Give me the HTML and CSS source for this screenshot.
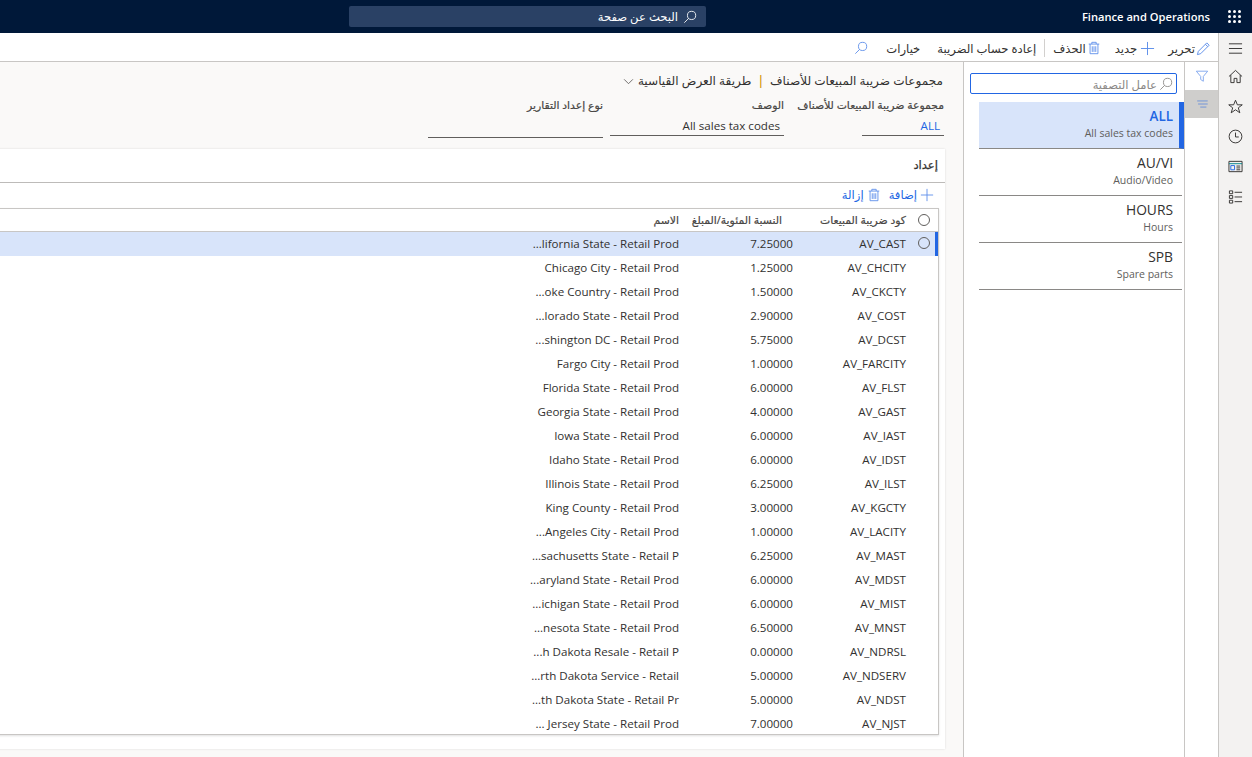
FILE: index.html
```html
<!DOCTYPE html>
<html lang="ar" dir="rtl">
<head>
<meta charset="utf-8">
<title>مجموعات ضريبة المبيعات للأصناف</title>
<link rel="stylesheet" href="styles.css">
</head>
<body>
<svg class="defs" width="0" height="0" aria-hidden="true">
  <symbol id="i-search" viewBox="0 0 16 16"><circle cx="9.8" cy="6.2" r="4.7"/><path d="M6.4 9.6 1.5 14.5"/></symbol>
  <symbol id="i-plus" viewBox="0 0 16 16"><path d="M8 1v14M1 8h14"/></symbol>
  <symbol id="i-trash" viewBox="0 0 16 16"><path d="M2 3.5h12M5.5 3.5V1.5h5v2M3.5 3.5v11h9v-11M6 6v6.5M8 6v6.5M10 6v6.5"/></symbol>
</svg>

<header class="topbar">
  <div class="brand-wrap">
    <span class="waffle"><i></i><i></i><i></i><i></i><i></i><i></i><i></i><i></i><i></i></span>
    <span class="brand">Finance and Operations</span>
  </div>
  <div class="pagesearch">
    <svg class="ico ico-white"><use href="#i-search"/></svg>
    <span>البحث عن صفحة</span>
  </div>
</header>

<div class="workspace">
  <nav class="rail">
    <button class="rail-btn rail-burger"><svg viewBox="0 0 16 16"><path d="M1 3h14M1 8h14M1 13h14"/></svg></button>
    <button class="rail-btn"><svg viewBox="0 0 16 16"><path d="M1 8 8 1.5 15 8M3 6.5V14.5H6.5V10H9.5V14.5H13V6.5"/></svg></button>
    <button class="rail-btn"><svg viewBox="0 0 16 16"><path d="M8 1.3 10 6.2H15.2L11 9.4 12.6 14.7 8 11.5 3.4 14.7 5 9.4 .8 6.2H6Z"/></svg></button>
    <button class="rail-btn"><svg viewBox="0 0 16 16"><circle cx="8" cy="8" r="6.8"/><path d="M8 3.8V8.5H11.5"/></svg></button>
    <button class="rail-btn"><svg viewBox="0 0 16 16"><path d="M1 2.5H15V13.5H1Z"/><path class="teal" d="M1 5H15"/><path class="blue" d="M3 7H7V11.5H3Z"/><path d="M9 7.5H13M9 9.5H13M9 11.5H13"/></svg></button>
    <button class="rail-btn"><svg viewBox="0 0 16 16"><path d="M1.5 2H5V5H1.5ZM1.5 7H5V10H1.5ZM1.5 12H5V15H1.5ZM7 3.5H15M7 8.5H15M7 13.5H15"/></svg></button>
  </nav>

  <div class="page">
    <div class="toolbar">
      <button class="tool t-edit"><svg class="ico ico-blue ico-big" viewBox="0 0 16 16"><path d="M1.5 14.5 2.5 11 11.5 2 14 4.5 5 13.5Z M10 3.5 12.5 6"/></svg><span>تحرير</span></button>
      <button class="tool t-new"><svg class="ico ico-blue ico-big"><use href="#i-plus"/></svg><span>جديد</span></button>
      <button class="tool t-del"><svg class="ico ico-blue"><use href="#i-trash"/></svg><span>الحذف</span></button>
      <span class="tool-sep"></span>
      <button class="tool t-recalc"><span>إعادة حساب الضريبة</span></button>
      <button class="tool t-opts"><span>خيارات</span></button>
      <button class="tool"><svg class="ico ico-blue"><use href="#i-search"/></svg></button>
    </div>

    <div class="body">
      <aside class="filter-tabs">
        <button class="ftab"><svg viewBox="0 0 16 16"><path d="M1.5 2.5H14.5L9.5 8.5V14L6.5 12V8.5Z"/></svg></button>
        <button class="ftab ftab-on"><svg viewBox="0 0 16 16"><path d="M2.5 4.5H14.5M3.5 8H14.5M6 11.5H13"/></svg></button>
      </aside>

      <aside class="listpane">
        <div class="filterbox">
          <svg class="ico ico-gray"><use href="#i-search"/></svg>
          <span>عامل التصفية</span>
        </div>
        <ul class="list">
          <li class="item item-on"><b>ALL</b><small>All sales tax codes</small></li>
          <li class="item"><b>AU/VI</b><small>Audio/Video</small></li>
          <li class="item"><b>HOURS</b><small>Hours</small></li>
          <li class="item"><b>SPB</b><small>Spare parts</small></li>
        </ul>
      </aside>

      <main class="main">
        <section class="summary">
          <h1 class="title">مجموعات ضريبة المبيعات للأصناف<span class="bar">|</span>طريقة العرض القياسية<svg class="chev" viewBox="0 0 12 8"><path d="M1 1.5 6 6.5 11 1.5"/></svg></h1>
          <div class="fields">
            <div class="field f1"><label>مجموعة ضريبة المبيعات للأصناف</label><div class="val link">ALL</div></div>
            <div class="field f2"><label>الوصف</label><div class="val">All sales tax codes</div></div>
            <div class="field f3"><label>نوع إعداد التقارير</label><div class="val"></div></div>
          </div>
        </section>

        <section class="card">
          <h2 class="card-title">إعداد</h2>
          <div class="actions">
            <button class="act"><svg class="ico ico-blue"><use href="#i-plus"/></svg><span>إضافة</span></button>
            <button class="act"><svg class="ico ico-blue"><use href="#i-trash"/></svg><span>إزالة</span></button>
          </div>
          <div class="grid">
            <div class="row head">
              <span class="radio"></span>
              <span class="c-code">كود ضريبة المبيعات</span>
              <span class="c-pct">النسبة المئوية/المبلغ</span>
              <span class="c-name">الاسم</span>
            </div>
            <div class="row sel"><span class="radio"></span><span class="c-code">AV_CAST</span><span class="c-pct">7.25000</span><span class="c-name">...lifornia State - Retail Prod</span></div>
            <div class="row"><span class="blank"></span><span class="c-code">AV_CHCITY</span><span class="c-pct">1.25000</span><span class="c-name">Chicago City - Retail Prod</span></div>
            <div class="row"><span class="blank"></span><span class="c-code">AV_CKCTY</span><span class="c-pct">1.50000</span><span class="c-name">...oke Country - Retail Prod</span></div>
            <div class="row"><span class="blank"></span><span class="c-code">AV_COST</span><span class="c-pct">2.90000</span><span class="c-name">...lorado State - Retail Prod</span></div>
            <div class="row"><span class="blank"></span><span class="c-code">AV_DCST</span><span class="c-pct">5.75000</span><span class="c-name">...shington DC - Retail Prod</span></div>
            <div class="row"><span class="blank"></span><span class="c-code">AV_FARCITY</span><span class="c-pct">1.00000</span><span class="c-name">Fargo City - Retail Prod</span></div>
            <div class="row"><span class="blank"></span><span class="c-code">AV_FLST</span><span class="c-pct">6.00000</span><span class="c-name">Florida State - Retail Prod</span></div>
            <div class="row"><span class="blank"></span><span class="c-code">AV_GAST</span><span class="c-pct">4.00000</span><span class="c-name">Georgia State - Retail Prod</span></div>
            <div class="row"><span class="blank"></span><span class="c-code">AV_IAST</span><span class="c-pct">6.00000</span><span class="c-name">Iowa State - Retail Prod</span></div>
            <div class="row"><span class="blank"></span><span class="c-code">AV_IDST</span><span class="c-pct">6.00000</span><span class="c-name">Idaho State - Retail Prod</span></div>
            <div class="row"><span class="blank"></span><span class="c-code">AV_ILST</span><span class="c-pct">6.25000</span><span class="c-name">Illinois State - Retail Prod</span></div>
            <div class="row"><span class="blank"></span><span class="c-code">AV_KGCTY</span><span class="c-pct">3.00000</span><span class="c-name">King County - Retail Prod</span></div>
            <div class="row"><span class="blank"></span><span class="c-code">AV_LACITY</span><span class="c-pct">1.00000</span><span class="c-name">...Angeles City - Retail Prod</span></div>
            <div class="row"><span class="blank"></span><span class="c-code">AV_MAST</span><span class="c-pct">6.25000</span><span class="c-name">...sachusetts State - Retail P</span></div>
            <div class="row"><span class="blank"></span><span class="c-code">AV_MDST</span><span class="c-pct">6.00000</span><span class="c-name">...aryland State - Retail Prod</span></div>
            <div class="row"><span class="blank"></span><span class="c-code">AV_MIST</span><span class="c-pct">6.00000</span><span class="c-name">...ichigan State - Retail Prod</span></div>
            <div class="row"><span class="blank"></span><span class="c-code">AV_MNST</span><span class="c-pct">6.50000</span><span class="c-name">...nesota State - Retail Prod</span></div>
            <div class="row"><span class="blank"></span><span class="c-code">AV_NDRSL</span><span class="c-pct">0.00000</span><span class="c-name">...h Dakota Resale - Retail P</span></div>
            <div class="row"><span class="blank"></span><span class="c-code">AV_NDSERV</span><span class="c-pct">5.00000</span><span class="c-name">...rth Dakota Service - Retail</span></div>
            <div class="row"><span class="blank"></span><span class="c-code">AV_NDST</span><span class="c-pct">5.00000</span><span class="c-name">...th Dakota State - Retail Pr</span></div>
            <div class="row"><span class="blank"></span><span class="c-code">AV_NJST</span><span class="c-pct">7.00000</span><span class="c-name">... Jersey State - Retail Prod</span></div>
          </div>
        </section>
      </main>
    </div>
  </div>
</div>
</body>
</html>
```

FILE: styles.css
```css
* { box-sizing: border-box; }
html, body { margin: 0; height: 100%; }
body {
  font-family: "Open Sans", "Noto Sans", "DejaVu Sans", sans-serif;
  font-size: 11.6px;
  color: #323130;
  background: #fff;
  overflow: hidden;
  display: flex;
  flex-direction: column;
}
button { all: unset; box-sizing: border-box; display: inline-flex; align-items: center; }
ul { list-style: none; margin: 0; padding: 0; }
h1, h2 { margin: 0; font-weight: 400; }
.defs { position: absolute; }

.ico { width: 14px; height: 14px; fill: none; stroke-width: 1; flex: none; }
.ico-big { width: 15px; height: 15px; }
.ico-blue { stroke: #2266e3; opacity: .75; }
.ico-white { stroke: #fff; }
.ico-gray { stroke: #8a8886; }

/* top bar */
.topbar { height: 33px; flex: none; background: #001839; display: flex; align-items: center; }
.brand-wrap { display: flex; align-items: center; height: 100%; width: 546px; flex: none; }
.waffle { width: 13px; height: 13px; margin-right: 11px; display: grid; grid-template-columns: repeat(3, 3px); gap: 2px; }
.waffle i { background: #fff; border-radius: 50%; }
.brand { color: #fff; font-weight: 600; font-size: 11.15px; margin-right: 18px; direction: ltr; }
.pagesearch {
  width: 357px; height: 21px; background: #2a4165; border-radius: 2px;
  color: #fff; display: flex; align-items: center; gap: 5px; padding-right: 9px; font-size: 11.6px;
}

/* layout */
.workspace { flex: 1; display: flex; min-height: 0; }
.rail { width: 34px; flex: none; background: #f3f2f1; border-left: 1px solid #c8c6c4; display: flex; flex-direction: column; align-items: center; }
.rail-btn { width: 33px; height: 30px; justify-content: center; flex: none; }
.rail-burger { margin-bottom: -2px; }
.rail-btn svg { width: 15px; height: 15px; fill: none; stroke: #323130; stroke-width: 1; }
.rail-btn .teal { stroke: #038387; }
.rail-btn .blue { stroke: #2266e3; }

.page { flex: 1; min-width: 0; display: flex; flex-direction: column; }
.toolbar { height: 29px; flex: none; display: flex; align-items: center; border-bottom: 1px solid #c8c6c4; padding: 2px 7px 0 0; }
.tool { gap: 1px; white-space: nowrap; }
.t-edit { margin-left: 13px; }
.t-new { margin-left: 14px; gap: 3px; }
.t-del { margin-left: 8px; gap: 1px; }
.tool-sep { width: 1px; height: 18px; background: #d2d0ce; margin-left: 8px; }
.t-recalc { margin-left: 17px; }
.t-opts { margin-left: 18px; }

.body { flex: 1; display: flex; min-height: 0; }
.filter-tabs { width: 34px; flex: none; border-left: 1px solid #c8c6c4; display: flex; flex-direction: column; }
.ftab { width: 33px; height: 28px; justify-content: center; }
.ftab svg { width: 14px; height: 14px; fill: none; stroke: #2266e3; opacity: .6; stroke-width: 1; }
.ftab-on { background: #cfcecc; }

.listpane { width: 221px; flex: none; border-left: 1px solid #c8c6c4; padding-top: 11px; }
.filterbox {
  width: 207px; height: 21px; margin-right: 7px; border: 1px solid #2266e3; border-radius: 2px;
  display: flex; align-items: center; gap: 2px; padding: 1px 3px 0 0; color: #8a8886;
}
.list { margin-top: 8px; }
.item {
  height: 47px; width: 203px; border-bottom: 1px solid #8a8886;
  padding: 4px 9px 0 0; display: flex; flex-direction: column; direction: ltr; align-items: flex-end;
  margin-right: 2px;
}
.item b { font-weight: 400; font-size: 13.8px; line-height: 20px; }
.item small { font-size: 10.5px; line-height: 15px; color: #605e5c; }
.item-on { background: #d8e4fa; border-right: 5px solid #2266e3; padding-right: 6px; margin-right: 0; width: 205px; }
.item-on b { color: #2266e3; font-weight: 600; font-size: 13.4px; }

.main { flex: 1; min-width: 0; background: #faf9f8; display: flex; flex-direction: column; overflow: hidden; padding-right: 18px; }
.summary { height: 87px; flex: none; padding-top: 10px; }
.title { font-size: 12.1px; line-height: 18px; display: flex; align-items: center; padding-right: 2px; white-space: nowrap; }
.bar { color: #d29200; margin: 0 6px; font-weight: 600; }
.chev { width: 11px; height: 7px; fill: none; stroke: #605e5c; margin-right: 4px; }
.fields { display: flex; margin-top: 7px; align-items: flex-start; padding-right: 1px; }
.field { flex: none; }
.field label { display: block; font-size: 10.8px; color: #484644; line-height: 16px; white-space: nowrap; -webkit-text-stroke: .2px #484644; }
.val { height: 20px; margin-top: 3px; border-bottom: 1px solid #605e5c; direction: ltr; text-align: right; padding: 2px 4px 0; line-height: 16px; }
.f1 { width: 160px; display: flex; flex-direction: column; align-items: flex-start; }
.f1 .val { width: 82px; }
.f2 { width: 174px; margin-left: 7px; }
.f3 { width: 175px; }
.f3 .val { margin-top: 5px; }
.link { color: #2266e3; }

.card { flex: 1; margin: 0 0 8px -20px; background: #fff; box-shadow: 0 0 2px rgba(0,0,0,.12); display: flex; flex-direction: column; min-height: 0; }
.card-title { height: 34px; flex: none; border-bottom: 1px solid #bdbbb9; font-size: 11.6px; line-height: 32px; padding-right: 7px; -webkit-text-stroke: .25px #323130; }
.actions { height: 25px; flex: none; display: flex; align-items: center; padding: 0 11px 2px 0; color: #2266e3; }
.act { gap: 3px; margin-left: 8px; }
.grid { margin: 0 6px 14px 0; flex: 1; min-height: 0; overflow: hidden; border: 1px solid #c8c6c4; box-shadow: 0 1px 2px rgba(0,0,0,.12); }
.row { height: 24px; display: flex; align-items: center; }
.head { height: 23px; border-bottom: 1px solid #c8c6c4; font-size: 10.8px; color: #484644; -webkit-text-stroke: .2px #484644; }
.sel { background: #d8e4fa; box-shadow: inset -3px 0 #2266e3; }
.sel .radio { margin-bottom: 2px; }
.radio { width: 12px; height: 12px; border-radius: 50%; border: 1px solid #605e5c; margin: 0 8px 0 10px; flex: none; }
.blank { width: 30px; flex: none; }
.c-code { width: 111px; flex: none; padding-right: 2px; direction: ltr; text-align: right; margin-top: -2px; }
.c-pct { width: 114px; flex: none; padding-right: 4px; direction: ltr; text-align: right; margin-top: -2px; }
.c-name { flex: none; padding-right: 4px; direction: ltr; text-align: right; white-space: nowrap; margin-top: -2px; }
.head .c-code, .head .c-pct, .head .c-name { direction: rtl; }
.head .c-pct { padding-right: 15px; white-space: nowrap; }
```
